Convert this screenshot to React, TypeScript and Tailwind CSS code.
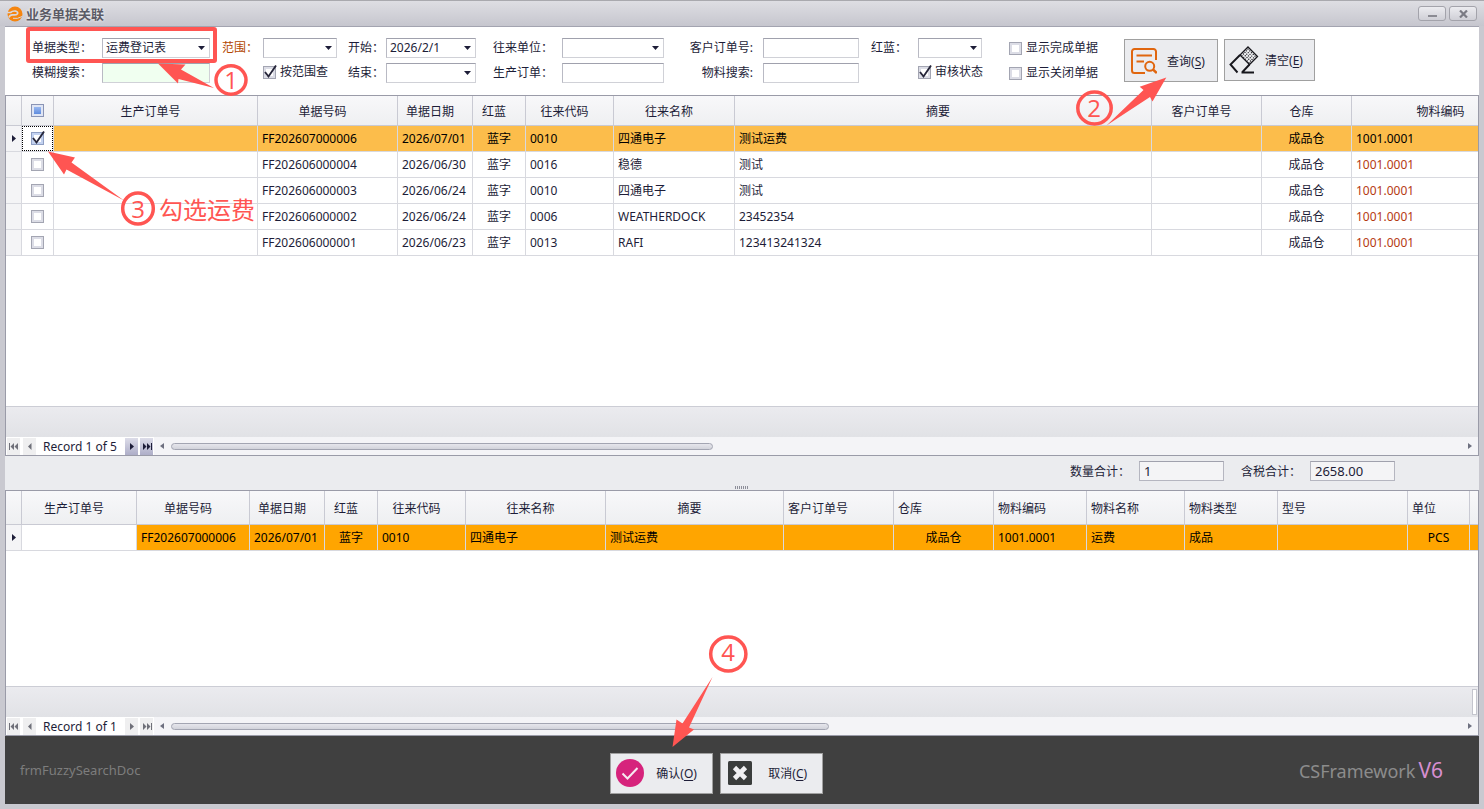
import React from "react";

type Align = "left" | "center";
interface Column {
  title: string;
  width: number;
  head?: Align;
  cell?: Align;
}

const topColumns: Column[] = [
  { title: "生产订单号", width: 204 },
  { title: "单据号码", width: 140 },
  { title: "单据日期", width: 75 },
  { title: "红蓝", width: 53, cell: "center" },
  { title: "往来代码", width: 88 },
  { title: "往来名称", width: 121 },
  { title: "摘要", width: 417 },
  { title: "客户订单号", width: 110 },
  { title: "仓库", width: 90, cell: "center" },
  { title: "物料编码", width: 188 },
];

const topRows: string[][] = [
  ["", "FF202607000006", "2026/07/01", "蓝字", "0010", "四通电子", "测试运费", "", "成品仓", "1001.0001"],
  ["", "FF202606000004", "2026/06/30", "蓝字", "0016", "稳德", "测试", "", "成品仓", "1001.0001"],
  ["", "FF202606000003", "2026/06/24", "蓝字", "0010", "四通电子", "测试", "", "成品仓", "1001.0001"],
  ["", "FF202606000002", "2026/06/24", "蓝字", "0006", "WEATHERDOCK", "23452354", "", "成品仓", "1001.0001"],
  ["", "FF202606000001", "2026/06/23", "蓝字", "0013", "RAFI", "123413241324", "", "成品仓", "1001.0001"],
];

const bottomColumns: Column[] = [
  { title: "生产订单号", width: 115 },
  { title: "单据号码", width: 113 },
  { title: "单据日期", width: 75 },
  { title: "红蓝", width: 53, cell: "center" },
  { title: "往来代码", width: 88 },
  { title: "往来名称", width: 140 },
  { title: "摘要", width: 178 },
  { title: "客户订单号", width: 110, head: "left" },
  { title: "仓库", width: 100, head: "left", cell: "center" },
  { title: "物料编码", width: 93, head: "left" },
  { title: "物料名称", width: 98, head: "left" },
  { title: "物料类型", width: 93, head: "left" },
  { title: "型号", width: 130, head: "left" },
  { title: "单位", width: 62, head: "left", cell: "center" },
  { title: "", width: 60, head: "left" },
];

const bottomRow = ["", "FF202607000006", "2026/07/01", "蓝字", "0010", "四通电子", "测试运费", "", "成品仓", "1001.0001", "运费", "成品", "", "PCS", ""];

function Check({ id, checked = false, label, hot = false }: { id: string; checked?: boolean; label?: string; hot?: boolean }) {
  return (
    <span className="flex items-center gap-1">
      <span className="relative block size-[13px]">
        <input
          id={id}
          type="checkbox"
          defaultChecked={checked}
          aria-label={label ? undefined : "选择"}
          className={
            hot
              ? "block size-[13px] appearance-none border border-[#8f9fc4] bg-white shadow-[inset_0_0_0_2px_#c3d2f0]"
              : "block size-[13px] appearance-none border border-[#a3a5b2] bg-white shadow-[inset_0_0_0_2px_#dcdde6]"
          }
        />
        {checked && (
          <svg viewBox="0 0 15 15" className="pointer-events-none absolute -top-0.5 left-0 size-[15px]">
            <path d="M2 8 5.500 12.500 13 1.500" fill="none" stroke="#26263a" strokeWidth="1.900" />
          </svg>
        )}
      </span>
      {label && (
        <label htmlFor={id} className="whitespace-nowrap">
          {label}
        </label>
      )}
    </span>
  );
}

const fieldBox = "block h-5 w-full border border-t-[#a0a1ad] border-r-[#d0d1d7] border-b-[#d0d1d7] border-l-[#b9bac4] px-1 text-[#1d1d38] outline-none";

function Combo({ id, value = "" }: { id: string; value?: string }) {
  return (
    <span className="relative block">
      <select id={id} defaultValue={value} className={`${fieldBox} appearance-none bg-white pl-[3px]`}>
        <option value={value}>{value}</option>
      </select>
      <svg viewBox="0 0 7 4" className="pointer-events-none absolute top-2 right-[5px] h-1 w-[7px]">
        <path d="M0 0h7L3.500 4z" fill="#1d1d38" />
      </svg>
    </span>
  );
}

function Text({ id, tint = "bg-white" }: { id: string; tint?: string }) {
  return <input id={id} type="text" className={`${fieldBox} ${tint}`} />;
}

function RowMarker() {
  return (
    <svg viewBox="0 0 4 7" className="mx-auto h-[7px] w-1">
      <path d="M0 0v7l4-3.500z" fill="#1d1d38" />
    </svg>
  );
}

const headCell = "h-full border-r border-b border-[#c9cad3] px-0 pt-0.5 pb-0 font-normal";
const navIcon = "block h-[9px] w-2.5";

function NavButton({ kind, active = false }: { kind: "first" | "prev" | "next" | "last"; active?: boolean }) {
  const paths = {
    first: "M0 1h1v7H0zM5 1v7L1.500 4.500zM9 1v7L5.500 4.500z",
    prev: "M6.500 1v7L3 4.500z",
    next: "M3 1v7l4-3.500z",
    last: "M9 1h1v7H9zM1 1v7l3.500-3.500zM5 1v7l3.500-3.500z",
  };
  return (
    <button
      type="button"
      aria-label={kind}
      className={
        active
          ? "flex h-[17px] w-[13px] items-center justify-center bg-linear-to-b from-[#dddde9] to-[#aeaec8] text-[#1d1d38]"
          : "flex h-[17px] w-[13px] items-center justify-center bg-[#efeff0] text-[#6f7079]"
      }
    >
      <svg viewBox="0 0 10 9" className={navIcon} fill="currentColor">
        <path d={paths[kind]} />
      </svg>
    </button>
  );
}

function Navigator({ label, forward, thumb }: { label: string; forward: boolean; thumb: string }) {
  return (
    <div className="flex h-[18px] items-center bg-[#f4f4f7]">
      <div className="flex h-full w-[148px] shrink-0 items-center bg-white pl-px">
        <NavButton kind="first" />
        <span className="w-[3px]" />
        <NavButton kind="prev" />
        <span className="w-[89px] pt-0.5 pl-[7px] whitespace-nowrap">{label}</span>
        <NavButton kind="next" active={forward} />
        <span className="w-0.5" />
        <NavButton kind="last" active={forward} />
      </div>
      <svg viewBox="0 0 4 6" className="ml-1.5 h-1.5 w-1 shrink-0">
        <path d="M4 0v6L0 3z" fill="#6e7080" />
      </svg>
      <div className="mx-[7px] flex-1">
        <div className={`h-[7px] rounded-full border border-[#a3a5b2] bg-linear-to-b from-[#e6e6ec] to-[#d2d3db] ${thumb}`} />
      </div>
      <svg viewBox="0 0 4 6" className="mr-1.5 h-1.5 w-1 shrink-0">
        <path d="M0 0v6l4-3z" fill="#6e7080" />
      </svg>
    </div>
  );
}

function DataGrid({ wide, children, strip, nav }: { wide: string; children: React.ReactNode; strip?: React.ReactNode; nav: React.ReactNode }) {
  return (
    <section className={`flex min-h-0 flex-col border border-[#9a9ba8] bg-white ${wide}`}>
      <div className="min-h-0 flex-1 overflow-hidden">{children}</div>
      <div className="flex h-[31px] items-start justify-end border-t border-[#cccdd5] bg-linear-to-b from-[#ebebef] to-[#e1e2e6] pt-0.5">{strip}</div>
      {nav}
    </section>
  );
}

function SearchIcon() {
  return (
    <svg viewBox="0 0 26 26" className="size-[26px] shrink-0" fill="none" stroke="#e0660f" strokeWidth="2">
      <path d="M14 25H3.500A2.500 2.500 0 0 1 1 22.500V3.500A2.500 2.500 0 0 1 3.500 1h19A2.500 2.500 0 0 1 25 3.500V12M5.500 7.500H21M5.500 13.500H13" />
      <circle cx="18.700" cy="18.300" r="4.500" />
      <path d="m22 21.500 3.800 3.500" strokeWidth="2.400" />
    </svg>
  );
}

function EraserIcon() {
  const dots: React.ReactElement[] = [];
  for (let i = 0; i < 5; i++) {
    for (let j = 0; j < 5; j++) {
      dots.push(<circle key={`${i}-${j}`} cx={19 + i * 1.750 - j * 1.500} cy={3.200 + i * 1.750 + j * 1.600} r="0.650" />);
    }
  }
  return (
    <svg viewBox="0 0 30 28" className="h-7 w-[30px] shrink-0" fill="none" stroke="#16161c" strokeWidth="1.600">
      <path d="M19 1 28.500 10.500 20.500 18.500 11 9z" strokeWidth="1.300" />
      <path d="M11 9 1.500 18.500l7 8M20.500 18.500l-7.500 8M12.500 26.500h12.500" strokeWidth="1.900" />
      <g fill="#16161c" stroke="none">
        {dots}
      </g>
    </svg>
  );
}

const actionButton = "flex items-center border border-[#a0a0a0] bg-[#ebecef] text-[#1d1d38]";

function Annotations() {
  return (
    <svg
      viewBox="0 0 1484 809"
      className="pointer-events-none absolute top-0 left-0 h-[809px] w-[1484px] font-['Open_Sans','Noto_Sans_CJK_SC',sans-serif]"
      fill="#ff5552"
    >
      <rect x="28" y="29" width="187" height="32" rx="1" fill="none" stroke="#ff5552" strokeWidth="4" />
      <g fill="none" stroke="#ff5552" strokeWidth="3.500">
        <ellipse cx="231" cy="80" rx="15" ry="14.200" />
        <ellipse cx="1094.500" cy="108" rx="16.700" ry="16" />
        <ellipse cx="138" cy="208.500" rx="15.300" ry="15.500" />
        <ellipse cx="728.300" cy="654" rx="17.600" ry="17" />
      </g>
      <path d="M158 63.500 185.500 64.500 181 69.500 214 88 178.500 79 178 83.500z" />
      <path d="M1166.300 77.500 1152.500 101.500 1150 97 1106.500 125.500 1143.500 90 1139.700 86.700z" />
      <path d="M48 151.500 75 157.500 71.500 162.500 124 200.500 66.500 169.500 64 174.500z" />
      <path d="M672.500 747 676.500 719.500 682.500 723.500 712.500 677 689 727.500 694 729.500z" />
      <g fontSize="24" textAnchor="middle">
        <text x="231" y="89">1</text>
        <text x="1094" y="117">2</text>
        <text x="138" y="218">3</text>
        <text x="728" y="661">4</text>
      </g>
      <text x="159" y="219" fontSize="24">
        勾选运费
      </text>
    </svg>
  );
}

export default function App() {
  return (
    <div className="relative flex min-h-screen w-full flex-col overflow-hidden bg-[#c9c9d0] font-['Noto_Sans','Noto_Sans_CJK_SC',sans-serif] text-[12px] leading-[18px] text-[#1d1d38]">
      <header className="flex h-[26px] shrink-0 items-center border-t border-[#a9a9ae] bg-linear-to-b from-[#dedee3] to-[#c6c6ce] pr-[7px] pl-[7px]">
        <svg viewBox="0 0 16 16" className="size-4">
          <circle cx="8" cy="8" r="7.500" fill="#f5850f" />
          <path d="M0 6.500H3.500Q6 4.500 9 5.200 11.500 6 10.300 8 9 9.300 5.500 8.800 2.500 9 2 11.500" fill="none" stroke="#d8d8de" strokeWidth="1.700" />
          <path d="M6 12.300q4.500 1 9-1.800" fill="none" stroke="#d8d8de" strokeWidth="1" />
        </svg>
        <h1 className="ml-[3px] flex-1 text-[13px] font-bold text-[#5b5b66] [text-shadow:0_0_3px_#ffffff]">业务单据关联</h1>
        <div className="flex gap-[3px]">
          <button type="button" aria-label="最小化" className="flex h-[15px] w-7 items-end justify-center rounded-[3px] border border-[#a3a3ab] bg-linear-to-b from-[#ececf0] to-[#cfcfd6] pb-[3px]">
            <span className="h-0.5 w-[9px] bg-[#8b8b93]" />
          </button>
          <button type="button" aria-label="关闭" className="flex h-[15px] w-7 items-center justify-center rounded-[3px] border border-[#a3a3ab] bg-linear-to-b from-[#ececf0] to-[#cfcfd6]">
            <svg viewBox="0 0 9 8" className="h-2 w-[9px]" stroke="#7b7b84" strokeWidth="2.200">
              <path d="M1 .500 8 7.500M8 .500 1 7.500" />
            </svg>
          </button>
        </div>
      </header>

      <main className="mx-[5px] mb-[5px] flex flex-1 flex-col border-t border-[#a3a4b0] bg-white">
        <form className="flex h-[68px] shrink-0 items-start pt-[11px] pl-[27px]" onSubmit={(e) => e.preventDefault()}>
          <div className="grid w-[178px] grid-cols-[70px_1fr] items-center gap-y-[5px]">
            <label htmlFor="docType">单据类型：</label>
            <Combo id="docType" value="运费登记表" />
            <label htmlFor="fuzzy">模糊搜索：</label>
            <Text id="fuzzy" tint="bg-[#f0fff0]" />
          </div>
          <div className="ml-3 grid w-[115px] grid-cols-[41px_1fr] items-center gap-y-[5px]">
            <label htmlFor="range" className="whitespace-nowrap text-[#b34700]">
              范围：
            </label>
            <Combo id="range" />
            <span />
            <Check id="byRange" checked label="按范围查" />
          </div>
          <div className="ml-[11px] grid w-32 grid-cols-[38px_1fr] items-center gap-y-[5px]">
            <label htmlFor="start" className="whitespace-nowrap">
              开始：
            </label>
            <Combo id="start" value="2026/2/1" />
            <label htmlFor="end" className="whitespace-nowrap">
              结束：
            </label>
            <Combo id="end" />
          </div>
          <div className="ml-[17px] grid w-[171px] grid-cols-[69px_1fr] items-center gap-y-[5px]">
            <label htmlFor="partner">往来单位：</label>
            <Combo id="partner" />
            <label htmlFor="order">生产订单：</label>
            <Text id="order" />
          </div>
          <div className="ml-6 grid w-[171px] grid-cols-[65px_1fr] items-center gap-x-2.5 gap-y-[5px]">
            <label htmlFor="customerOrder" className="text-right whitespace-nowrap">
              客户订单号:
            </label>
            <Text id="customerOrder" />
            <label htmlFor="material" className="text-right">
              物料搜索:
            </label>
            <Text id="material" />
          </div>
          <div className="ml-3 grid w-[111px] grid-cols-[47px_64px] items-center gap-y-[5px]">
            <label htmlFor="color">红蓝：</label>
            <Combo id="color" />
            <span />
            <Check id="audit" checked label="审核状态" />
          </div>
          <div className="ml-[27px] grid grid-rows-[20px_20px] items-center gap-y-[5px]">
            <Check id="showDone" label="显示完成单据" />
            <Check id="showClosed" label="显示关闭单据" />
          </div>
          <div className="ml-[26px] flex items-start gap-1.5 pt-px">
            <button type="submit" className={`${actionButton} h-[43px] w-[94px] gap-2.5 pl-1.5`}>
              <SearchIcon />
              <span className="pt-0.5 whitespace-nowrap">
                查询(<u className="underline-offset-2">S</u>)
              </span>
            </button>
            <button type="reset" className={`${actionButton} h-[42px] w-[91px] gap-1.5 pl-1`}>
              <EraserIcon />
              <span className="pt-0.5 whitespace-nowrap">
                清空(<u className="underline-offset-2">E</u>)
              </span>
            </button>
          </div>
        </form>

        <DataGrid wide="basis-[361px] grow" nav={<Navigator label="Record 1 of 5" forward thumb="w-[42%]" />}>
          <table className="w-[1534px] min-w-full table-fixed border-separate border-spacing-0">
            <colgroup>
              <col style={{ width: 16 }} />
              <col style={{ width: 32 }} />
              {topColumns.map((c) => (
                <col key={c.title} style={{ width: c.width }} />
              ))}
            </colgroup>
            <thead>
              <tr className="h-[30px] bg-linear-to-b from-[#f8f8fa] to-[#eeeff1]">
                <th className={headCell} />
                <th className="border-r border-b border-[#c9cad3] p-0">
                  <span className="mx-auto block size-[13px] border border-[#8a94b5] bg-linear-to-b from-[#a9c4f5] to-[#4f7fd8] shadow-[inset_0_0_0_2px_#dfe5f4]" />
                </th>
                {topColumns.map((c) => (
                  <th key={c.title} className={`${headCell} text-center`}>
                    <span className="block pr-2.5">{c.title}</span>
                  </th>
                ))}
              </tr>
            </thead>
            <tbody>
              {topRows.map((row, r) => (
                <tr key={row[1]} className={r === 0 ? "h-[26px] bg-[#fcbd4b] text-black" : "h-[26px] bg-white"}>
                  <td className="border-r border-b border-[#d8d9df] bg-[#f4f4f6] p-0">{r === 0 && <RowMarker />}</td>
                  <td className="border-r border-b border-[#d8d9df] bg-white p-0">
                    <span className={r === 0 ? "flex h-[25px] items-center justify-center border border-dotted border-black" : "flex h-[25px] items-center justify-center"}>
                      <Check id={`pick${r}`} checked={r === 0} hot={r === 0} />
                    </span>
                  </td>
                  {row.map((v, i) => (
                    <td
                      key={i}
                      className={`border-r border-b border-[#d8d9df] py-0 ${topColumns[i].cell === "center" ? "px-0 text-center" : "pr-0 pl-1"} ${
                        i === 9 && r > 0 ? "text-[#b53a12]" : ""
                      }`}
                    >
                      {v}
                    </td>
                  ))}
                </tr>
              ))}
            </tbody>
          </table>
        </DataGrid>

        <div className="relative flex h-[34px] shrink-0 items-start justify-end bg-[#ebecef] pt-[5px] pr-[84px]">
          <label htmlFor="qty" className="mr-2 w-[61px] pt-0.5 whitespace-nowrap">
            数量合计：
          </label>
          <input id="qty" readOnly value="1" className="h-5 w-[85px] border border-[#b5b6c0] border-t-[#a0a1ad] bg-[#f4f4f6] px-1 text-[13px] outline-none" />
          <label htmlFor="tax" className="mr-2 ml-[17px] w-[61px] pt-0.5 whitespace-nowrap">
            含税合计：
          </label>
          <input id="tax" readOnly value="2658.00" className="h-5 w-[85px] border border-[#b5b6c0] border-t-[#a0a1ad] bg-[#f4f4f6] px-1 text-[13px] outline-none" />
          <svg viewBox="0 0 14 3" className="absolute bottom-px left-1/2 h-[3px] w-3.5 -translate-x-1/2" stroke="#8d8e99" strokeDasharray="1 1" strokeWidth="3">
            <path d="M0 1.500h13" />
          </svg>
        </div>

        <DataGrid
          wide="basis-[246px] grow"
          strip={<span className="mr-px h-[26px] w-[5px] border border-[#c4c5cd] bg-white" />}
          nav={<Navigator label="Record 1 of 1" forward={false} thumb="w-[51%]" />}
        >
          <table className="w-[1524px] min-w-full table-fixed border-separate border-spacing-0">
            <colgroup>
              <col style={{ width: 16 }} />
              {bottomColumns.map((c, i) => (
                <col key={i} style={{ width: c.width }} />
              ))}
            </colgroup>
            <thead>
              <tr className="h-[34px] bg-linear-to-b from-[#f8f8fa] to-[#eeeff1]">
                <th className={headCell} />
                {bottomColumns.map((c, i) => (
                  <th key={i} className={`${headCell} ${c.head === "left" ? "text-left" : "text-center"}`}>
                    <span className={c.head === "left" ? "block pl-1" : "block pr-2.5"}>{c.title}</span>
                  </th>
                ))}
              </tr>
            </thead>
            <tbody>
              <tr className="h-[26px] text-black">
                <td className="border-r border-b border-[#d8d9df] bg-[#f4f4f6] p-0">
                  <RowMarker />
                </td>
                {bottomRow.map((v, i) => (
                  <td
                    key={i}
                    className={`border-r border-b border-[#d8d9df] py-0 ${bottomColumns[i].cell === "center" ? "px-0 text-center" : "pr-0 pl-1"} ${
                      i === 0 ? "bg-white" : "bg-[#ffa500]"
                    }`}
                  >
                    {v}
                  </td>
                ))}
              </tr>
            </tbody>
          </table>
        </DataGrid>

        <footer className="grid h-[68px] shrink-0 grid-cols-[12fr_auto_13fr] items-center bg-[#404040]">
          <span className="pl-[15px] text-[13px] text-[#7d7d7d]">frmFuzzySearchDoc</span>
          <div className="flex gap-[7px] pt-1.5">
            <button type="button" className={`${actionButton} h-[41px] w-[103px] gap-3 pl-[5px]`}>
              <svg viewBox="0 0 28 28" className="size-7 shrink-0">
                <circle cx="14" cy="14" r="14" fill="#d6237c" />
                <path d="M6.500 14.500 11.500 19.500 21.500 9" fill="none" stroke="#f6eaf1" strokeWidth="2" />
              </svg>
              <span className="pt-0.5 whitespace-nowrap">
                确认(<u className="underline-offset-2">O</u>)
              </span>
            </button>
            <button type="button" className={`${actionButton} h-[41px] w-[103px] gap-4 pl-[7px]`}>
              <svg viewBox="0 0 24 24" className="size-6 shrink-0">
                <rect width="24" height="24" rx="1.500" fill="#3a3d3c" />
                <path d="M6.500 6.500 17.500 17.500M17.500 6.500 6.500 17.500" stroke="#f0f0f2" strokeWidth="4.600" />
              </svg>
              <span className="pt-0.5 whitespace-nowrap">
                取消(<u className="underline-offset-2">C</u>)
              </span>
            </button>
          </div>
          <div className="flex items-baseline justify-end gap-[3px] pr-9 text-[#8c8c8c]">
            <span className="text-[18px]">CSFramework</span>
            <span className="text-[21px] text-[#d78fd0]">V6</span>
          </div>
        </footer>
      </main>
      <Annotations />
    </div>
  );
}
